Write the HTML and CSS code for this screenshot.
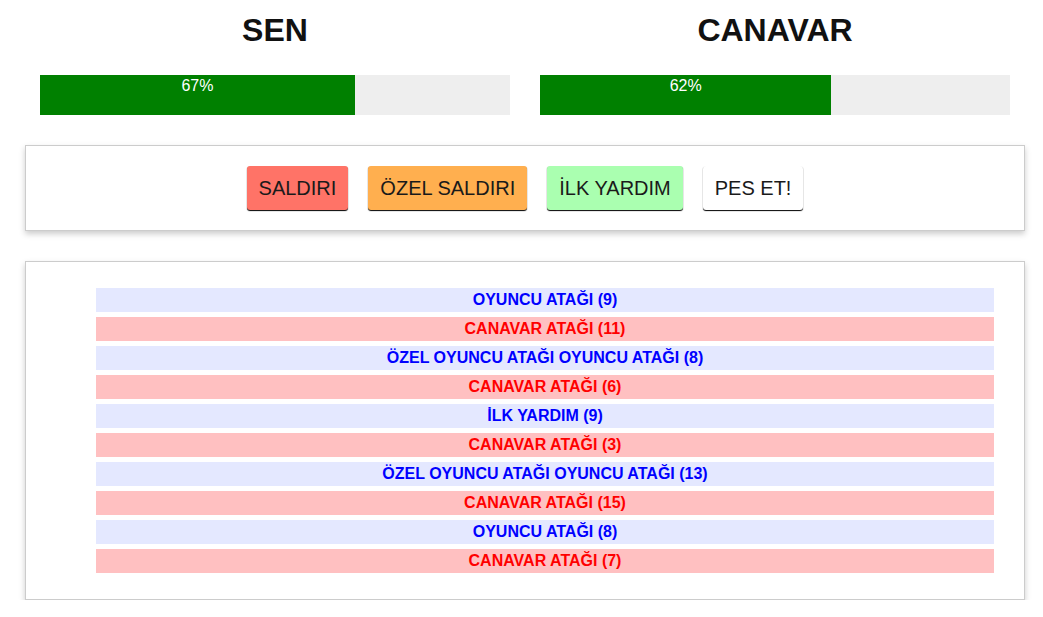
FILE: index.html
```html
<!DOCTYPE html>
<html lang="tr">
<head>
<meta charset="utf-8">
<title>Canavar</title>
<link rel="stylesheet" href="styles.css">
</head>
<body>
<div class="page">
  <section class="players">
    <div class="player">
      <h1 class="name">SEN</h1>
      <div class="healthbar"><div class="health" style="width: 67%">67%</div></div>
    </div>
    <div class="player">
      <h1 class="name">CANAVAR</h1>
      <div class="healthbar"><div class="health" style="width: 62%">62%</div></div>
    </div>
  </section>

  <section class="box controls">
    <button class="btn btn-attack">SALDIRI</button>
    <button class="btn btn-special">ÖZEL SALDIRI</button>
    <button class="btn btn-heal">İLK YARDIM</button>
    <button class="btn btn-giveup">PES ET!</button>
  </section>

  <section class="box log">
    <ul class="log-list">
      <li class="turn player-turn">Oyuncu atağı (9)</li>
      <li class="turn monster-turn">Canavar atağı (11)</li>
      <li class="turn player-turn">Özel oyuncu atağı oyuncu atağı (8)</li>
      <li class="turn monster-turn">Canavar atağı (6)</li>
      <li class="turn player-turn">İlk yardım (9)</li>
      <li class="turn monster-turn">Canavar atağı (3)</li>
      <li class="turn player-turn">Özel oyuncu atağı oyuncu atağı (13)</li>
      <li class="turn monster-turn">Canavar atağı (15)</li>
      <li class="turn player-turn">Oyuncu atağı (8)</li>
      <li class="turn monster-turn">Canavar atağı (7)</li>
    </ul>
  </section>
</div>
</body>
</html>
```

FILE: styles.css
```css
html, body {
  margin: 0;
  padding: 0;
  background: #fff;
}

body {
  font-family: "Liberation Sans", Arial, Helvetica, sans-serif;
  color: #222;
}

.page {
  width: 1000px;
  margin-left: 25px;
}

.players {
  display: grid;
  grid-template-columns: 1fr 1fr;
}

.player {
  padding: 0 15px;
}

.name {
  margin: 12px 0 27px;
  font-size: 32px;
  line-height: 36px;
  font-weight: bold;
  text-align: center;
  color: #111;
}

.healthbar {
  height: 40px;
  background-color: #eee;
}

.health {
  height: 100%;
  background-color: #008000;
  color: #fff;
  font-size: 16px;
  line-height: 22.86px;
  text-align: center;
}

.box {
  margin-top: 30px;
  border: 1px solid #ccc;
  box-shadow: 0 3px 6px #ccc;
  background: #fff;
}

.controls {
  display: flex;
  justify-content: center;
  gap: 20px;
  padding: 20px 0;
}

.btn {
  font-family: "Liberation Sans", Arial, Helvetica, sans-serif;
  font-size: 20px;
  line-height: 20px;
  padding: 12px 12px;
  border: none;
  border-radius: 3px;
  box-shadow: 0 1px 1px #000;
  color: #1a1a1a;
  background-color: #eee;
  margin: 0;
}

.btn-attack { background-color: #ff7367; }
.btn-special { background-color: #ffaf4f; }
.btn-heal { background-color: #aaffb0; }
.btn-giveup { background-color: #ffffff; }

.log {
  padding: 26px 30px 26px 70px;
}

.log-list {
  list-style: none;
  margin: 0;
  padding: 0;
  display: flex;
  flex-direction: column;
  gap: 5px;
}

.turn {
  height: 24px;
  line-height: 24px;
  font-size: 16px;
  font-weight: bold;
  text-transform: uppercase;
  text-align: center;
}

.player-turn {
  color: #0000ff;
  background-color: #e4e8ff;
}

.monster-turn {
  color: #ff0000;
  background-color: #ffc0c1;
}
```
